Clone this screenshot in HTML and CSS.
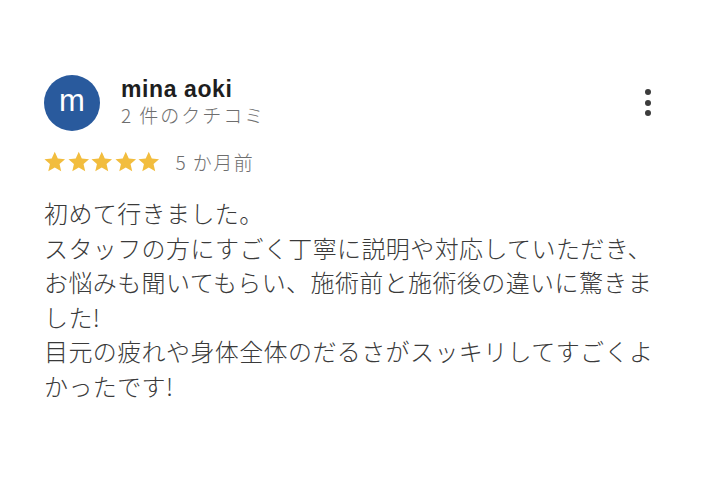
FILE: index.html
```html
<!DOCTYPE html>
<html lang="ja">
<head>
<meta charset="utf-8">
<link rel="stylesheet" href="styles.css">
</head>
<body>
<div class="review">
  <div class="header">
    <div class="avatar">m</div>
    <div class="who">
      <div class="name">mina aoki</div>
      <div class="count">2 件のクチコミ</div>
    </div>
    <div class="more" aria-label="more">
      <span class="dot"></span><span class="dot"></span><span class="dot"></span>
    </div>
  </div>
  <div class="meta">
    <div class="stars">
      <svg viewBox="0 0 24 24" class="star"><path d="M12 1.8l3.1 6.9 7.4.7-5.6 5 1.7 7.4L12 17.9l-6.6 3.9 1.7-7.4-5.6-5 7.4-.7z"/></svg>
      <svg viewBox="0 0 24 24" class="star"><path d="M12 1.8l3.1 6.9 7.4.7-5.6 5 1.7 7.4L12 17.9l-6.6 3.9 1.7-7.4-5.6-5 7.4-.7z"/></svg>
      <svg viewBox="0 0 24 24" class="star"><path d="M12 1.8l3.1 6.9 7.4.7-5.6 5 1.7 7.4L12 17.9l-6.6 3.9 1.7-7.4-5.6-5 7.4-.7z"/></svg>
      <svg viewBox="0 0 24 24" class="star"><path d="M12 1.8l3.1 6.9 7.4.7-5.6 5 1.7 7.4L12 17.9l-6.6 3.9 1.7-7.4-5.6-5 7.4-.7z"/></svg>
      <svg viewBox="0 0 24 24" class="star"><path d="M12 1.8l3.1 6.9 7.4.7-5.6 5 1.7 7.4L12 17.9l-6.6 3.9 1.7-7.4-5.6-5 7.4-.7z"/></svg>
    </div>
    <span class="when">5 か月前</span>
  </div>
  <p class="text">初めて行きました。<br>スタッフの方にすごく丁寧に説明や対応していただき、<br>お悩みも聞いてもらい、施術前と施術後の違いに驚きました!<br>目元の疲れや身体全体のだるさがスッキリしてすごくよかったです!</p>
</div>
</body>
</html>
```

FILE: styles.css
```css
html, body {
  margin: 0;
  padding: 0;
  background: #ffffff;
}
body {
  font-family: "Liberation Sans", "Noto Sans CJK JP", sans-serif;
  color: #3a3a3a;
}
.review {
  padding: 75px 0 0 44px;
  width: 622px;
}
.header {
  display: flex;
  align-items: flex-start;
  height: 56px;
}
.avatar {
  width: 56px;
  height: 56px;
  border-radius: 50%;
  background: #295a9d;
  color: #ffffff;
  font-family: "Liberation Sans", sans-serif;
  font-size: 31px;
  line-height: 52px;
  text-align: center;
  flex: none;
}
.who {
  margin-left: 21px;
  flex: 1;
}
.name {
  font-weight: bold;
  font-size: 23px;
  letter-spacing: 0.6px;
  color: #1e1e1e;
  line-height: 26px;
  margin-top: 1px;
}
.count {
  font-family: "Noto Sans CJK JP", sans-serif;
  font-weight: 300;
  font-size: 19px;
  letter-spacing: 2px;
  color: #6e6e6e;
  line-height: 26px;
}
.more {
  display: flex;
  flex-direction: column;
  align-items: center;
  gap: 4.5px;
  margin-top: 14px;
  margin-right: 15px;
}
.dot {
  width: 6px;
  height: 6px;
  border-radius: 50%;
  background: #3c3c3c;
}
.meta {
  display: flex;
  align-items: center;
  margin-top: 20px;
  height: 22px;
}
.stars {
  display: flex;
  margin-left: -1px;
}
.star {
  width: 23.5px;
  height: 23.5px;
  fill: #f2bd3e;
}
.when {
  margin-left: 15px;
  font-family: "Noto Sans CJK JP", sans-serif;
  font-weight: 300;
  font-size: 19px;
  letter-spacing: 1.5px;
  color: #6e6e6e;
  line-height: 22px;
}
.text {
  margin: 23px 0 0 0;
  font-family: "Noto Sans CJK JP", sans-serif;
  font-weight: 300;
  font-size: 24px;
  line-height: 34.6px;
  letter-spacing: 0.4px;
  color: #3a3a3a;
}
```
